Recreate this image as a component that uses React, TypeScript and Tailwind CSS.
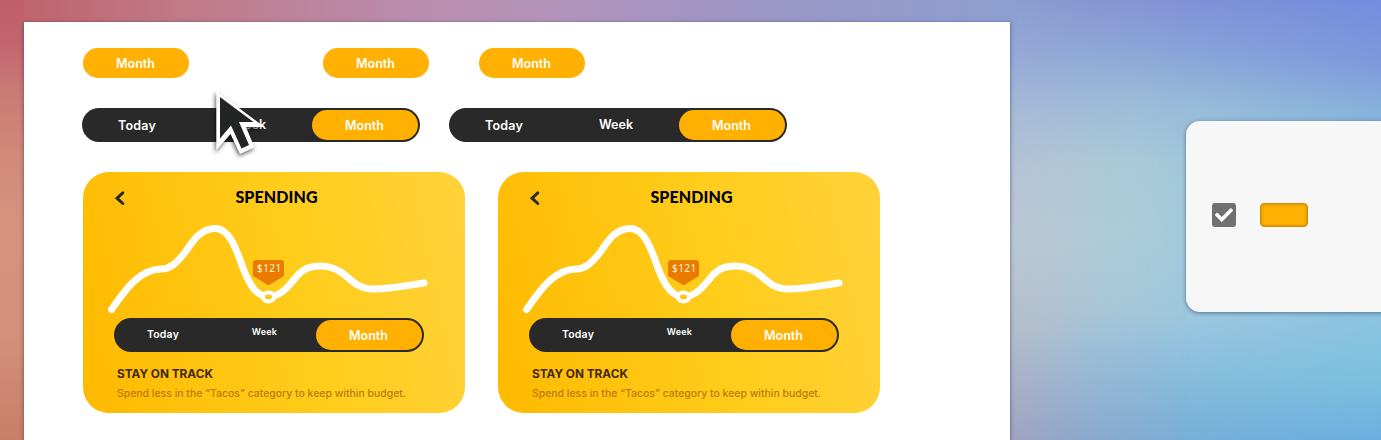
import { FaCheck } from "react-icons/fa";

function MonthButton({ className = "" }: { className?: string }) {
  return (
    <div
      className={`flex h-[30px] w-[106px] shrink-0 items-center justify-center rounded-full bg-[#ffb000] pt-[3px] pr-px text-[12.5px] font-semibold text-white ${className}`}
    >
      Month
    </div>
  );
}

function SegmentedControl() {
  return (
    <div className="flex h-[34px] w-[338px] items-center rounded-full bg-[#292929] pr-0.5 text-[12.5px] font-semibold text-white">
      <span className="w-[110px] pt-0.5 text-center tracking-[0.2px]">Today</span>
      <span className="flex-1 pl-[27px] text-center">Week</span>
      <div className="w-[33px]" />
      <MonthButton />
    </div>
  );
}

function Chart() {
  return (
    <svg width="382" height="106" viewBox="0 0 382 106" fill="none" className="block">
      <path
        d="M28.5 97.5C41 80 55 57.5 78 57C88 56.5 93 51 100 43C108 33 115 16.5 132.5 16.5C146 16.5 153 36 160 56C168 77 175 84.5 186 84.5C198 84.5 206 74 214 64C221 56 228 54 238 54C249 54 256 58 263 64C272 72 278 77 291 77C307 77 324 73.5 341 71"
        stroke="white"
        strokeWidth="7"
        strokeLinecap="round"
      />
      <ellipse cx="185.5" cy="85" rx="5.6" ry="4.4" fill="#ffc81a" stroke="white" strokeWidth="4" />
      <path
        d="M173 48H198Q201 48 201 51V64L187 72.5Q185.5 73.5 184 72.5L170 64V51Q170 48 173 48Z"
        fill="#e97c00"
      />
      <text x="186.3" y="60.3" textAnchor="middle" fill="#fff5df" fontSize="10" letterSpacing=".4" fontFamily="Noto Sans, sans-serif">
        $121
      </text>
    </svg>
  );
}

function SpendingCard() {
  return (
    <section className="flex h-[241px] w-[382px] flex-col rounded-[26px] bg-[linear-gradient(78deg,#ffb900_0%,#ffc20c_25%,#ffcd1c_58%,#ffd23a_100%)]">
      <header className="grid h-10 grid-cols-[66px_1fr_61px] items-center pt-[9px]">
        <svg width="12" height="16" viewBox="0 0 12 16" fill="none" className="mt-[3px] ml-[31px]">
          <path d="M8.8 2.8L3 8.2L8.8 13.5" stroke="#292929" strokeWidth="3" strokeLinecap="round" strokeLinejoin="miter" />
        </svg>
        <h2 className="text-center font-['Lato'] text-base leading-5 font-black tracking-[0.1px] text-black">SPENDING</h2>
      </header>
      <Chart />
      <div className="ml-[31px] flex h-[34px] w-[310px] shrink-0 items-center rounded-full bg-[#292929] pr-0.5 font-semibold text-white">
        <span className="w-[98px] text-center text-[10.5px] tracking-[0.2px]">Today</span>
        <span className="w-[105px] pb-1.5 text-center text-[9px] tracking-[0.2px]">Week</span>
        <div className="-ml-px">
          <MonthButton />
        </div>
      </div>
      <div className="ml-[34px] pt-[13px]">
        <h3 className="text-[11.8px] leading-[18px] font-bold whitespace-nowrap text-[#43290b]">STAY ON TRACK</h3>
        <p className="pt-px text-[10.45px] leading-5 font-medium whitespace-nowrap text-[#bd7b05]">
          Spend less in the “Tacos” category to keep within budget.
        </p>
      </div>
    </section>
  );
}

function Backdrop() {
  return (
    <div className="absolute inset-0 -z-10 bg-[linear-gradient(to_bottom,#748de0_0px,#8098dc_60px,#86b2dc_110px,#8cc4e2_320px,#7cc0e0_380px,#6cb0e0_440px)]">
      <div className="absolute inset-0 bg-[linear-gradient(to_bottom,#8492d4_0px,#8ba6d8_50px,#9cbcd8_100px,#a8cbd9_160px,#a9cddb_230px,#a2c9dc_310px,#90c0de_355px,#7baed6_440px)] mask-[linear-gradient(to_right,black_1130px,rgba(0,0,0,0.75)_1200px,transparent_1381px)]" />
      <div className="absolute inset-0 bg-[linear-gradient(to_bottom,#8c9dcf_0px,#94a8d6_50px,#a6bad6_110px,#b5c3d5_170px,#bcc7d4_240px,#b4bdcb_330px,#a0a3c0_440px)] mask-[linear-gradient(to_right,black_1010px,rgba(0,0,0,0.35)_1100px,transparent_1190px)]" />
      <div className="absolute inset-x-0 top-0 h-[22px] w-[1010px] bg-[linear-gradient(to_right,#c06068_0%,#c07a88_18%,#ba8cad_40%,#b494bb_55%,#a095c3_70%,#8c9fd0_100%)]" />
      <div className="absolute inset-y-0 left-0 w-6 bg-[linear-gradient(to_bottom,#bf6068_0px,#c3656f_45px,#ca7975_90px,#d18979_150px,#d5937d_220px,#d4917b_330px,#c87f67_440px)]" />
    </div>
  );
}

function Cursor() {
  return (
    <svg
      width="60"
      height="72"
      viewBox="0 0 60 72"
      className="absolute top-[86px] left-[208px] drop-shadow-[-1px_2px_2px_rgba(0,0,0,0.65)]"
    >
      <path d="M8.3 5V64.5L22.5 48L32 68L46.5 61.5L38 41H56.5Z" fill="white" />
      <path d="M12 11V52.5L23 39.5L33.5 62.5L41 59L31 36H45.5Z" fill="#222524" />
    </svg>
  );
}

export default function App() {
  return (
    <div className="relative isolate flex h-[440px] w-full overflow-hidden pt-[22px] pl-6 font-['Inter',sans-serif]">
      <Backdrop />
      <main className="h-[440px] w-[986px] shrink-0 bg-white pt-[26px] pl-[59px] shadow-[0_1px_4px_rgba(40,50,80,0.65)]">
        <div className="flex">
          <MonthButton />
          <MonthButton className="ml-[134px]" />
          <MonthButton className="ml-[50px]" />
        </div>
        <div className="-ml-px flex gap-[29px] pt-[30px]">
          <SegmentedControl />
          <SegmentedControl />
        </div>
        <div className="flex gap-[33px] pt-[30px]">
          <SpendingCard />
          <SpendingCard />
        </div>
      </main>
      <aside className="mt-[99px] ml-[176px] flex h-[191px] w-[220px] shrink-0 items-center rounded-l-[14px] bg-[#f7f7f7] pb-[3px] pl-[26px] shadow-[0_1px_4px_rgba(50,80,120,0.7)]">
        <div className="flex size-6 items-center justify-center rounded-[3px] bg-[#707070] text-white">
          <FaCheck size={18} />
        </div>
        <div className="ml-6 h-6 w-12 rounded-[4px] border border-[#cb9008] bg-[#ffb000] shadow-[inset_0_0_3px_rgba(150,90,0,0.65)]" />
      </aside>
      <Cursor />
    </div>
  );
}
